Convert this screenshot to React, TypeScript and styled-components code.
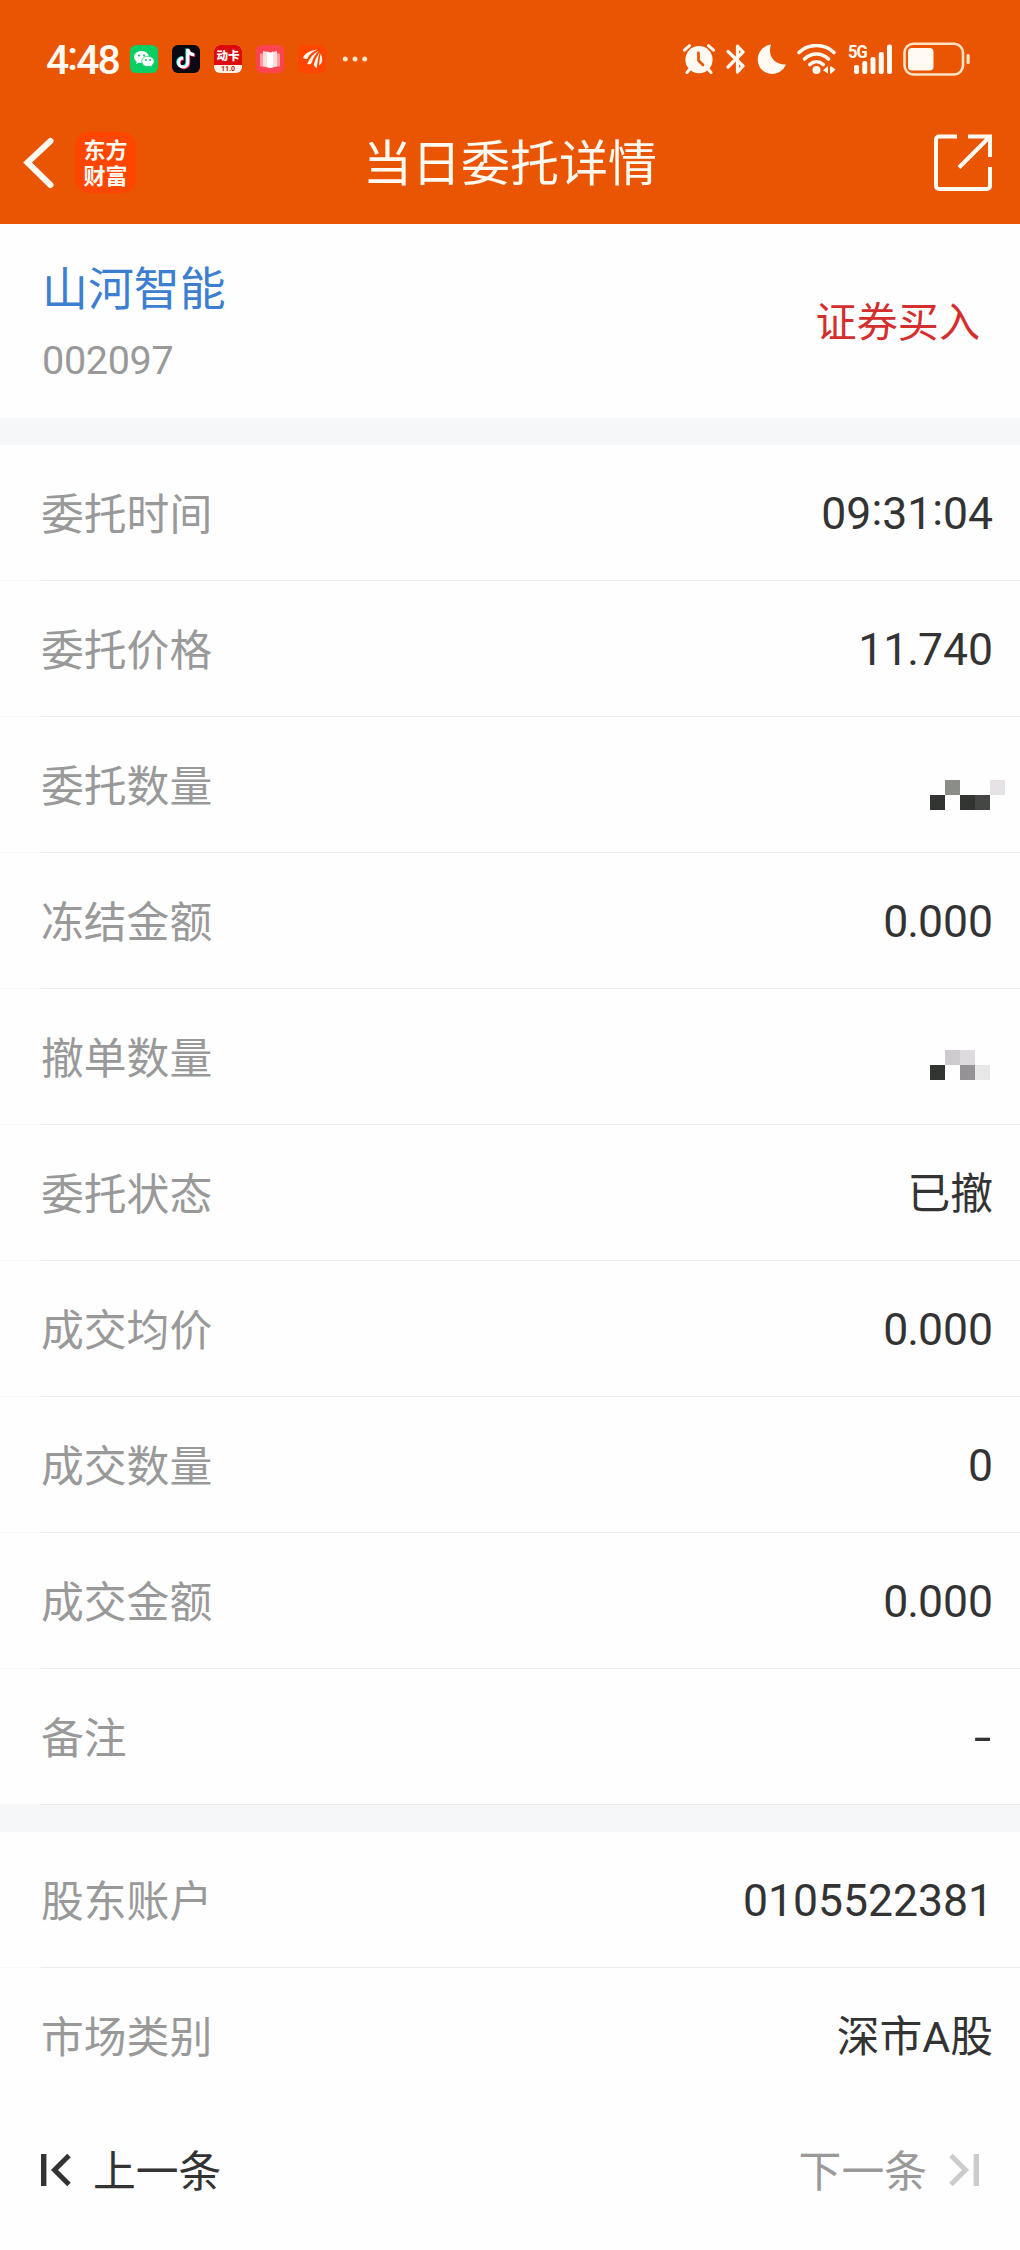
import React from "react";
import styled, { createGlobalStyle } from "styled-components";

const CREAM = "#fffaf2";
const CJK = '"Noto Sans CJK SC", "Noto Sans", sans-serif';
const MIXED = 'Roboto, "Noto Sans CJK SC", sans-serif';

const GlobalStyle = createGlobalStyle`
  * { box-sizing: border-box; }
  body { margin: 0; background: #fefefe; font-family: ${CJK}; }
`;

const Page = styled.div`
  width: 1020px;
  height: 2250px;
  display: flex;
  flex-direction: column;
  background: #fefefe;
  overflow: hidden;
`;

const TopArea = styled.header`
  height: 224px;
  background: #ea5504;
  color: ${CREAM};
`;

const StatusBar = styled.div`
  height: 100px;
  padding: 18px 49px 0 46px;
  display: flex;
  align-items: center;
  justify-content: space-between;
`;

const StatusGroup = styled.div`
  display: flex;
  align-items: center;
`;

const Clock = styled.div`
  width: 84px;
  font: 500 41px/60px Roboto, sans-serif;
  letter-spacing: -2px;
  white-space: nowrap;
  padding-top: 1px;
`;

const Colon = styled.span<{ $lift: number }>`
  display: inline-block;
  line-height: 1;
  transform: translateY(-${(p) => p.$lift}px);
`;

const AppIcons = styled.div`
  display: flex;
  gap: 14px;
`;

const CardBadge = styled.div`
  width: 28px;
  height: 28px;
  border-radius: 6px;
  overflow: hidden;
  background: #fff1e6;
  text-align: center;
  white-space: nowrap;
`;

const CardTop = styled.div`
  height: 20px;
  background: #dc0a0c;
  color: #fff;
  font: 900 11.5px/21px ${CJK};
`;

const CardBottom = styled.div`
  color: #b3231a;
  font: 700 7px/8px Roboto, sans-serif;
`;

const Dots = styled.svg`
  margin-left: 16px;
`;

const SignalBox = styled.div`
  width: 45px;
  height: 30px;
  margin-left: 12px;
  display: grid;
`;

const SignalLabel = styled.span`
  grid-area: 1 / 1;
  font: 700 18px/15px Roboto, sans-serif;
  letter-spacing: -1.2px;
  transform: scaleX(0.92);
  transform-origin: left;
  height: 15px;
`;

const SignalBars = styled.svg`
  grid-area: 1 / 1;
`;

const Spaced = styled.svg<{ $ml: number }>`
  margin-left: ${(p) => p.$ml}px;
`;

const NavBar = styled.div`
  height: 124px;
  padding: 1px 28px 0 22px;
  display: grid;
  grid-template-columns: 1fr auto 1fr;
  align-items: center;
`;

const NavLeft = styled.div`
  display: flex;
  align-items: center;
  gap: 21px;
`;

const BrandLogo = styled.div`
  width: 61px;
  height: 61px;
  border-radius: 14px;
  background: #ff4600;
  display: flex;
  flex-direction: column;
  align-items: center;
  padding-top: 3px;
  font: 700 22px/26px ${CJK};
`;

const Title = styled.h1`
  margin: 0 -3px 6px 3px;
  font: 400 49px/60px ${CJK};
`;

const NavRight = styled.div`
  display: flex;
  justify-content: flex-end;
`;

const StockHeader = styled.section`
  height: 194px;
  padding: 0 40px 0 42px;
  display: flex;
  align-items: center;
  justify-content: space-between;
`;

const StockName = styled.div`
  margin-top: 3px;
  font: 400 45.9px/60px ${CJK};
  color: #3c7fd0;
`;

const StockCode = styled.div`
  margin-top: 17px;
  font: 400 39.5px/58px Roboto, sans-serif;
  letter-spacing: -0.3px;
  color: #999;
`;

const Side = styled.div`
  margin-bottom: 5px;
  font: 400 41.1px/60px ${CJK};
  color: #d32f2f;
`;

const Gap = styled.div<{ $h: number }>`
  height: ${(p) => p.$h}px;
  background: #f6f7f9;
`;

const Row = styled.div<{ $line: boolean }>`
  height: 136px;
  padding: 0 27px 0 41px;
  display: flex;
  align-items: center;
  justify-content: space-between;
  background: ${(p) =>
    p.$line
      ? "linear-gradient(to right, #f8f8f8 41px, #ebebeb 41px) bottom / 100% 1px no-repeat"
      : "none"};
`;

const Label = styled.span`
  margin-bottom: 5px;
  font: 400 42.8px/60px ${CJK};
  color: #999;
`;

const Value = styled.span`
  padding-top: 2px;
  font: 400 44.5px/60px ${MIXED};
  color: #333;
`;

const Point = styled.span`
  margin: 0 -1px;
`;

const TextValue = styled(Value)`
  font-size: 42.8px;
`;

const Dash = styled(Value)`
  margin-right: 2px;
  transform: scaleX(1.4);
  transform-origin: right;
`;

const Mosaic = styled.div<{ $drop: number }>`
  display: grid;
  grid-template-columns: repeat(5, 15px);
  grid-auto-rows: 15px;
  margin-right: -12px;
  margin-top: ${(p) => p.$drop}px;
`;

const Cell = styled.i<{ $c: string }>`
  background: ${(p) => p.$c};
`;

const Footer = styled.footer`
  height: 132px;
  padding: 0 41px;
  display: flex;
  align-items: center;
  justify-content: space-between;
`;

const PagerButton = styled.div<{ $color: string }>`
  display: flex;
  align-items: center;
  gap: 22px;
  font: 400 42.8px/60px ${CJK};
  color: ${(p) => p.$color};
`;

const PagerText = styled.span`
  margin-bottom: 5px;
`;

type Item = { label: string; value?: string; kind?: "text" | "dash"; mosaic?: string[]; drop?: number };

const N = "transparent";

const orderRows: Item[] = [
  { label: "委托时间", value: "09:31:04" },
  { label: "委托价格", value: "11.740" },
  {
    label: "委托数量",
    mosaic: [N, "#8b8d89", N, N, "#e6e2e6", "#323431", N, "#323431", "#454745", N],
    drop: 20,
  },
  { label: "冻结金额", value: "0.000" },
  {
    label: "撤单数量",
    mosaic: [N, "#cdcbce", "#dddbde", N, N, "#323431", N, "#949294", "#e7e7e7", N],
    drop: 16,
  },
  { label: "委托状态", value: "已撤", kind: "text" },
  { label: "成交均价", value: "0.000" },
  { label: "成交数量", value: "0" },
  { label: "成交金额", value: "0.000" },
  { label: "备注", value: "-", kind: "dash" },
];

const accountRows: Item[] = [
  { label: "股东账户", value: "0105522381" },
  { label: "市场类别", value: "深市A股", kind: "text" },
];

function Digits({ text, lift }: { text: string; lift: number }) {
  return (
    <>
      {text.split(/([:.])/).map((part, i) =>
        part === ":" ? (
          <Colon key={i} $lift={lift}>:</Colon>
        ) : part === "." ? (
          <Point key={i}>.</Point>
        ) : (
          <React.Fragment key={i}>{part}</React.Fragment>
        )
      )}
    </>
  );
}

function DetailRow({ item, line }: { item: Item; line: boolean }) {
  return (
    <Row $line={line}>
      <Label>{item.label}</Label>
      {item.mosaic ? (
        <Mosaic $drop={item.drop ?? 0}>
          {item.mosaic.map((c, i) => (
            <Cell key={i} $c={c} />
          ))}
        </Mosaic>
      ) : item.kind === "text" ? (
        <TextValue>{item.value}</TextValue>
      ) : item.kind === "dash" ? (
        <Dash>{item.value}</Dash>
      ) : (
        <Value>
          <Digits text={item.value ?? ""} lift={4} />
        </Value>
      )}
    </Row>
  );
}

const WeChatIcon = () => (
  <svg width="28" height="28" viewBox="0 0 28 28">
    <rect width="28" height="28" rx="6" fill="#07cf63" />
    <path d="M11.5 6C7.4 6 4 8.7 4 12.1c0 1.9 1.1 3.5 2.7 4.6L6 19l2.7-1.3c.9.3 1.8.4 2.8.4 4.1 0 7.500-2.700 7.500-6S15.600 6 11.500 6z" fill="#fff" />
    <path d="M18 11.200c-3.500 0-6.200 2.300-6.200 5.200s2.700 5.200 6.200 5.200c.8 0 1.500-.1 2.200-.3l2.200 1.100-.6-2c1.500-1 2.400-2.400 2.400-4 0-2.900-2.700-5.200-6.200-5.200z" fill="#fff" stroke="#07cf63" strokeWidth=".8" />
    <g fill="#07b556">
      <circle cx="9" cy="10.500" r="1" />
      <circle cx="14" cy="10.500" r="1" />
      <circle cx="16" cy="15" r=".9" />
      <circle cx="20.200" cy="15" r=".9" />
    </g>
  </svg>
);

const NOTE = "M15.800 4v13.500a4.600 4.600 0 1 1-4.600-4.600M15.800 4c.4 3.300 2.500 5.500 6.500 5.800";

const TikTokIcon = () => (
  <svg width="28" height="28" viewBox="0 0 28 28">
    <rect width="28" height="28" rx="6" fill="#0b0a14" />
    <g fill="none" strokeWidth="3">
      <path d={NOTE} stroke="#25e5e0" transform="translate(-.9 -.5)" />
      <path d={NOTE} stroke="#f6295a" transform="translate(.9 .8)" />
      <path d={NOTE} stroke="#fff" />
    </g>
  </svg>
);

const BookIcon = () => (
  <svg width="28" height="28" viewBox="0 0 28 28">
    <rect width="28" height="28" rx="6" fill="#ff4350" />
    <path d="M4 8.500h4v13H4zM24 8.500h-4v13h4z" fill="#ff9c9c" />
    <path d="M7 6l7 1.500L21 6v15.500L14 23l-7-1.500z" fill="#ffdcd8" />
    <path d="M11 6.500l3 1.500 3-1.500V22l-3 1-3-1z" fill="#fff" />
  </svg>
);

const FeatherIcon = () => (
  <svg width="28" height="28" viewBox="0 0 28 28">
    <rect width="28" height="28" rx="6" fill="#ff4600" />
    <g fill="#fff6ea">
      <path d="M19.500 4.500C12.500 5.500 7 8 5 12.500c.8 1.300 2.600 1.800 4.300 1.300C10.800 9.800 14.500 7 19.500 4.500z" />
      <path d="M21 5.500C15.500 8.500 11.500 13 9.300 18.700c1.200 1 3 .9 4.200-.4C14.800 13.800 17 9.500 21 5.500z" />
      <path d="M22 6.800c-2.800 3.700-5 8-6.300 13 .6 1.400 1.600 2.700 3 3.200.900-5 1.200-11 3.300-16.200z" />
      <path d="M22.800 8.500c-1 3.800-1.400 7.500-1.700 12 2-1.400 3.300-3.500 3.100-6-.1-2.200-.7-4-1.400-6z" />
    </g>
  </svg>
);

const AlarmIcon = () => (
  <svg width="32" height="30" viewBox="0 0 32 30" fill="none" stroke={CREAM} strokeLinecap="round">
    <circle cx="16" cy="15.700" r="13.600" fill={CREAM} stroke="none" />
    <path d="M1.500 6.200L6.500 1.700M30.500 6.200L25.500 1.700" strokeWidth="3" />
    <path d="M7 25l-3 3.500M25 25l3 3.500" strokeWidth="3" />
    <path d="M15.500 9v7.500l4.500 4.500" stroke="#ea5504" strokeWidth="2.800" />
  </svg>
);

const BluetoothIcon = () => (
  <Spaced $ml={11} width="20" height="30" viewBox="0 0 20 30" fill="none" stroke={CREAM} strokeWidth="3.200" strokeLinejoin="round" strokeLinecap="round">
    <path d="M2 7.500L17 22l-5.500 6V2L17 8 2 23" />
  </Spaced>
);

const MoonIcon = () => (
  <Spaced $ml={11} width="30" height="30" viewBox="0 0 30 30">
    <path d="M14 .5C10.500 10 16 21 29 20.500 26.500 26.300 21 30 15 30 7 30 .8 23.500 .8 15.500.8 8 6.500 1.500 14 .5z" fill={CREAM} />
  </Spaced>
);

const WifiIcon = () => (
  <Spaced $ml={10} width="39" height="30" viewBox="0 0 39 30" fill="none" stroke={CREAM} strokeWidth="3.600" strokeLinecap="round">
    <path d="M2 8.500C12 -.8 27 -.8 37 8.500" />
    <path d="M7.500 15C14.500 8.300 24.500 8.300 31.500 15" />
    <path d="M12.800 20.500c4-3.700 9.400-3.700 13.400 0" />
    <circle cx="19.500" cy="26" r="4" fill={CREAM} stroke="none" />
    <path d="M31 22v7.500l-5-3.200zM33 22.500h1.300v0l4.200 3-4.200 4H33z" fill={CREAM} stroke="none" />
  </Spaced>
);

const BatteryIcon = () => (
  <Spaced $ml={10} width="68" height="34" viewBox="0 0 68 34">
    <rect x="1.500" y="1.800" width="58.500" height="30.700" rx="9" fill="none" stroke="#ffe3c4" strokeWidth="2.600" />
    <rect x="5" y="6" width="25.500" height="22.500" rx="4" fill={CREAM} />
    <rect x="63.500" y="12" width="3.200" height="10" rx="1.600" fill="#ffe3c4" />
  </Spaced>
);

const bars = [21, 17, 13, 8, 0.5];

export default function App() {
  return (
    <Page>
      <GlobalStyle />
      <TopArea>
        <StatusBar>
          <StatusGroup>
            <Clock>
              <Digits text="4:48" lift={4} />
            </Clock>
            <AppIcons>
              <WeChatIcon />
              <TikTokIcon />
              <CardBadge>
                <CardTop>动卡</CardTop>
                <CardBottom>11.0</CardBottom>
              </CardBadge>
              <BookIcon />
              <FeatherIcon />
            </AppIcons>
            <Dots width="26" height="8" viewBox="0 0 26 8" fill="#ffe3c4">
              <circle cx="3.300" cy="4" r="2.500" />
              <circle cx="13" cy="4" r="2.500" />
              <circle cx="22.700" cy="4" r="2.500" />
            </Dots>
          </StatusGroup>
          <StatusGroup>
            <AlarmIcon />
            <BluetoothIcon />
            <MoonIcon />
            <WifiIcon />
            <SignalBox>
              <SignalLabel>5G</SignalLabel>
              <SignalBars width="45" height="30" viewBox="0 0 45 30" fill={CREAM}>
                {bars.map((top, i) => (
                  <rect key={i} x={6 + i * 8.25} y={top} width="5" height={30 - top} rx="2" />
                ))}
              </SignalBars>
            </SignalBox>
            <BatteryIcon />
          </StatusGroup>
        </StatusBar>
        <NavBar>
          <NavLeft>
            <svg width="32" height="52" viewBox="0 0 32 52" fill="none" stroke={CREAM} strokeWidth="6" strokeLinecap="round">
              <path d="M28.500 4L5.500 25.500l23 22.500" />
            </svg>
            <BrandLogo>
              <span>东方</span>
              <span>财富</span>
            </BrandLogo>
          </NavLeft>
          <Title>当日委托详情</Title>
          <NavRight>
            <svg width="60" height="60" viewBox="0 0 60 60" fill="none" stroke={CREAM} strokeWidth="4">
              <path d="M25 3.500H7a3 3 0 0 0-3 3V53a3 3 0 0 0 3 3h48a3 3 0 0 0 3-3V34" />
              <path d="M36 3.500h22V24M57.500 4L27 34.500" />
            </svg>
          </NavRight>
        </NavBar>
      </TopArea>

      <StockHeader>
        <div>
          <StockName>山河智能</StockName>
          <StockCode>002097</StockCode>
        </div>
        <Side>证券买入</Side>
      </StockHeader>

      <Gap $h={27} />
      {orderRows.map((item) => (
        <DetailRow key={item.label} item={item} line />
      ))}
      <Gap $h={27} />
      {accountRows.map((item, i) => (
        <DetailRow key={item.label} item={item} line={i === 0} />
      ))}

      <Footer>
        <PagerButton $color="#333">
          <svg width="30" height="34" viewBox="0 0 30 34" fill="none" stroke="#333">
            <path d="M2.700 1v32" strokeWidth="5.400" />
            <path d="M28 2.500L13.500 17 28 31.500" strokeWidth="5" />
          </svg>
          <PagerText>上一条</PagerText>
        </PagerButton>
        <PagerButton $color="#999">
          <PagerText>下一条</PagerText>
          <svg width="30" height="34" viewBox="0 0 30 34" fill="none" stroke="#ccc">
            <path d="M27.300 1v32" strokeWidth="5.400" />
            <path d="M2 2.500L16.500 17 2 31.500" strokeWidth="5" />
          </svg>
        </PagerButton>
      </Footer>
    </Page>
  );
}
